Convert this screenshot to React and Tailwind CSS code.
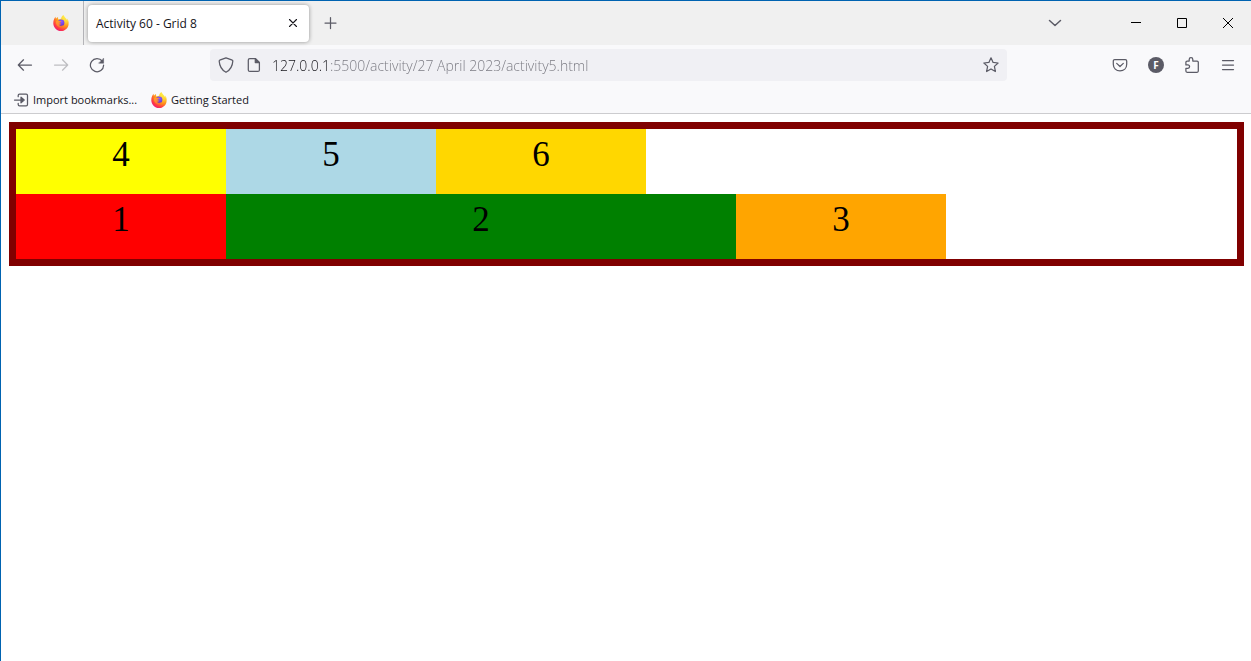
import React from 'react';

function FirefoxLogo({ id }) {
  const flame = `${id}-flame`;
  const globe = `${id}-globe`;
  const tail = `${id}-tail`;
  return (
    <svg viewBox="0 0 16 16" className="size-4 shrink-0" aria-hidden="true">
      <defs>
        <radialGradient id={flame} cx="0.8" cy="0.08" r="1.08">
          <stop offset="0" stopColor="#fff44f" />
          <stop offset="0.35" stopColor="#ffd02f" />
          <stop offset="0.6" stopColor="#ff8c1a" />
          <stop offset="0.82" stopColor="#ff3647" />
          <stop offset="1" stopColor="#e31587" />
        </radialGradient>
        <radialGradient id={globe} cx="0.6" cy="0.3" r="0.7">
          <stop offset="0" stopColor="#8a5cff" />
          <stop offset="0.6" stopColor="#7542e5" />
          <stop offset="1" stopColor="#592acb" />
        </radialGradient>
        <linearGradient id={tail} x1="0" y1="0" x2="1" y2="1">
          <stop offset="0" stopColor="#ffa436" />
          <stop offset="1" stopColor="#ff6a2a" />
        </linearGradient>
      </defs>
      <path
        d="M15.3 5.6c-.3-.8-1-1.7-1.6-2 .5.9.7 1.7.8 2.3C13.600 3.600 12 2.700 10.800.700l-.3-.7C8.900 1 8.200 2.600 8.100 3.800c-.9 0-1.700.3-2.400.7C5 3.900 4.900 2.800 5.100 2 4.200 2.400 3.500 3.200 3 3.800 2.600 3.300 2.600 2.300 2.700 1.800 1.500 2.900.3 5.200.3 8.200.3 12.500 3.800 16 8 16c3.700 0 6.800-2.600 7.500-6.100.3-1.500.2-3.100-.2-4.300z"
        fill={`url(#${flame})`}
      />
      <circle cx="8" cy="7.800" r="3.4" fill={`url(#${globe})`} />
      <path
        d="M3.300 6.200c.8-.8 2.300-.9 3.200-.3.7-.1 1.400.1 1.700.5-.1.600-1.500.8-1.800 1.400.3.700 1 .7 1.900.9-.4 1-1.700 1.300-2.600.9.900 1.400 3.300 1.700 4.700.5-.8 1.900-3.500 2.500-5.400 1.200C3.400 10.200 2.700 8 3.300 6.200z"
        fill={`url(#${tail})`}
      />
    </svg>
  );
}

function Icon({ children, className = 'text-[#5b5b66]' }) {
  return (
    <svg
      viewBox="0 0 16 16"
      className={`size-4 shrink-0 ${className}`}
      fill="none"
      stroke="currentColor"
      strokeWidth="1.25"
      strokeLinecap="round"
      strokeLinejoin="round"
      aria-hidden="true"
    >
      {children}
    </svg>
  );
}

function IconButton({ label, className = 'size-9', children, ...rest }) {
  return (
    <button
      type="button"
      aria-label={label}
      className={`flex shrink-0 items-center justify-center ${className}`}
      {...rest}
    >
      {children}
    </button>
  );
}

function TabBar() {
  return (
    <header className="flex h-11 items-center bg-[#f0f0f0]">
      <div className="flex h-11 w-[83px] shrink-0 items-center justify-end border-r border-[#b4b4b8] pr-3.5">
        <FirefoxLogo id="view" />
      </div>
      <div className="ml-1 flex h-[37px] w-[221px] shrink-0 items-center rounded bg-white px-2 shadow-[0_0_4px_rgba(0,0,0,0.4)]">
        <button type="button" className="flex-1 pt-0.5 text-left text-[12px] leading-4">
          Activity 60 - Grid 8
        </button>
        <IconButton label="Close tab" className="size-4">
          <Icon className="text-[#15141a]">
            <path d="M4.500 4.500l7 7M11.500 4.500l-7 7" strokeWidth="1.1" />
          </Icon>
        </IconButton>
      </div>
      <IconButton label="New tab" className="ml-1 size-9">
        <Icon>
          <path d="M7.500 2.500v11M2 8h11" />
        </Icon>
      </IconButton>
      <div className="flex-1" />
      <IconButton label="List all tabs" className="mr-10 size-9">
        <Icon>
          <path d="M2.500 5.500l5.500 5 5.500-5" strokeWidth="1.5" />
        </Icon>
      </IconButton>
      <IconButton label="Minimize" className="h-11 w-[46px]">
        <svg viewBox="0 0 10 10" className="size-[10px]" aria-hidden="true">
          <path d="M0 4.500h10" stroke="#000" />
        </svg>
      </IconButton>
      <IconButton label="Maximize" className="h-11 w-[46px]">
        <svg viewBox="0 0 10 10" className="size-[10px]" fill="none" aria-hidden="true">
          <path d="M.5.5h9v9h-9z" stroke="#000" />
        </svg>
      </IconButton>
      <IconButton label="Close window" className="h-11 w-[46px]">
        <svg viewBox="0 0 10 10" className="size-[10px]" aria-hidden="true">
          <path d="M0 0l10 10M10 0L0 10" stroke="#000" />
        </svg>
      </IconButton>
    </header>
  );
}

function NavBar() {
  return (
    <nav className="flex h-10 items-center pr-[5px] pl-1.5" aria-label="Navigation">
      <IconButton label="Back">
        <Icon>
          <path d="M14.500 8h-13M6.500 2.800L1.300 8l5.200 5.200" />
        </Icon>
      </IconButton>
      <IconButton label="Forward" disabled>
        <Icon className="text-[#bebec2]">
          <path d="M1.500 8h13M9.500 2.800L14.700 8l-5.200 5.200" />
        </Icon>
      </IconButton>
      <IconButton label="Reload">
        <Icon>
          <path d="M13.300 4.200A6.600 6.600 0 1 0 14.600 8.200" />
          <path d="M14.600 1.500v4.700H9.900z" fill="currentColor" strokeWidth="0.5" />
        </Icon>
      </IconButton>
      <div className="mx-[95px] flex h-8 min-w-0 flex-1 items-center rounded bg-[#f0f0f4] px-2">
        <Icon>
          <path d="M8 .8l6.300 2.400c.4.200.6.500.5.900C14.500 9 12.300 13 8 15.300 3.700 13 1.500 9 1.200 4.100c0-.4.1-.7.5-.9z" />
        </Icon>
        <Icon className="ml-3 text-[#5b5b66]">
          <path d="M3.800 1.600h5.700l3.900 3.900v7.400c0 .9-.6 1.500-1.500 1.500H3.800c-.9 0-1.500-.6-1.500-1.500V3.100c0-.9.600-1.500 1.500-1.500z" />
          <path d="M9.300 1.600v4h4z" fill="currentColor" />
        </Icon>
        <input
          type="text"
          aria-label="Address"
          defaultValue="127.0.0.1:5500/activity/27 April 2023/activity5.html"
          className="ml-2.5 min-w-0 flex-1 bg-[linear-gradient(to_right,#15141a_56px,#77777f_56px)] bg-clip-text pt-0.5 text-[14px] leading-5 font-light text-transparent outline-none"
        />
        <IconButton label="Bookmark this page" className="size-4">
          <Icon>
            <path d="M8 .8l2.100 4.600 5 .6-3.700 3.400 1 5.100L8 12l-4.400 2.500 1-5.100L.9 6l5-.6z" />
          </Icon>
        </IconButton>
      </div>
      <IconButton label="Save to Pocket">
        <Icon>
          <path d="M2.700 2.600h10.600c.8 0 1.400.5 1.400 1.300v3.400c0 4-2.900 6.600-6.700 6.600S1.300 11.300 1.300 7.300V3.900c0-.8.600-1.300 1.400-1.300z" />
          <path d="M4.700 6.400L8 9.500l3.300-3.100" />
        </Icon>
      </IconButton>
      <IconButton label="Account">
        <span className="flex size-4 items-center justify-center rounded-full bg-[#5b5b66] text-[10px] leading-none font-bold text-white">
          F
        </span>
      </IconButton>
      <IconButton label="Extensions">
        <Icon>
          <path d="M5.200 4V2.500a1.800 1.800 0 0 1 3.600 0V4h4.300c.7 0 1.200.5 1.200 1.200v8.900c0 .7-.5 1.200-1.200 1.200H3.100c-.7 0-1.200-.5-1.200-1.200v-2.800h2a1.700 1.700 0 0 0 0-3.400h-2V5.200C1.900 4.500 2.400 4 3.100 4z" />
        </Icon>
      </IconButton>
      <IconButton label="Open application menu">
        <Icon>
          <path d="M2.500 3.500h11M2.500 8h11M2.500 12.500h11" />
        </Icon>
      </IconButton>
    </nav>
  );
}

function BookmarksBar() {
  return (
    <div className="flex h-7 items-center gap-3.5 pt-px pl-3 text-[11px] leading-4">
      <button type="button" className="flex items-center gap-1">
        <Icon>
          <path d="M5.200 4.700V3.400c0-.8.5-1.300 1.300-1.300h6.700c.8 0 1.300.5 1.300 1.300v9.200c0 .8-.5 1.300-1.300 1.300H6.500c-.8 0-1.300-.5-1.300-1.300v-1.300M1.500 8h7" />
          <path d="M8 5.200L11.200 8 8 10.800z" fill="currentColor" />
        </Icon>
        Import bookmarks...
      </button>
      <a href="#getting-started" className="flex items-center gap-1">
        <FirefoxLogo id="start" />
        Getting Started
      </a>
    </div>
  );
}

const cells = [
  { label: '1', place: 'col-start-1 row-start-2 bg-[#ff0000]' },
  { label: '2', place: 'col-start-2 col-span-3 row-start-2 bg-[#008000]' },
  { label: '3', place: 'col-start-5 row-start-2 bg-[#ffa500]' },
  { label: '4', place: 'col-start-1 row-start-1 bg-[#ffff00]' },
  { label: '5', place: 'col-start-2 row-start-1 bg-[#add8e6]' },
  { label: '6', place: 'col-start-3 row-start-1 bg-[#ffd700]' },
];

export default function App() {
  return (
    <div className="min-h-screen border-t border-l border-[#0063b1] bg-white font-['Open_Sans','Noto_Sans',sans-serif] text-[#15141a]">
      <TabBar />
      <div className="border-b border-[#cccccf] bg-[#f9f9fb]">
        <NavBar />
        <BookmarksBar />
      </div>
      <main className="py-2 pr-[7px] pl-2">
        <div className="grid grid-cols-[210px_210px_210px_90px_210px] border-[7px] border-[#800000] text-center font-['Liberation_Serif',serif] text-[35px] leading-10 text-black">
          {cells.map(({ label, place }) => (
            <div key={label} className={`px-1 pt-1.5 pb-[19px] ${place}`}>
              {label}
            </div>
          ))}
        </div>
      </main>
    </div>
  );
}
